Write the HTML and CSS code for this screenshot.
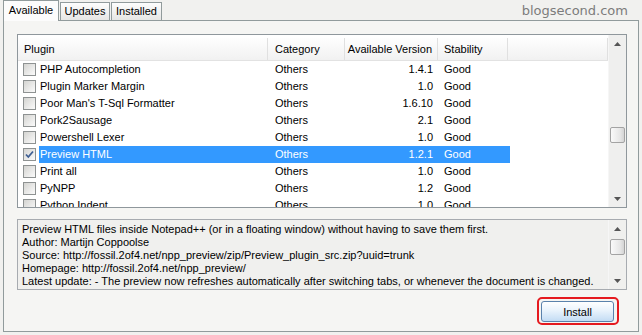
FILE: index.html
```html
<!doctype html>
<html lang="en">
    <head>
        <meta charset="UTF-8" />
        <title>Plugin Manager</title>
        <link rel="stylesheet" href="styles.css">
    </head>
    <body>
        <div class="top">
            <div class="tabs">
                <div class="tab tab-active">Available</div>
                <div class="tab tab-updates">Updates</div>
                <div class="tab tab-installed">Installed</div>
            </div>
            <div class="watermark">blogsecond.com</div>
        </div>

        <div class="panel">
            <div class="listbox">
                <div class="list">
                    <div class="list-header">
                        <div class="h-plugin">Plugin</div>
                        <div class="h-cat">Category</div>
                        <div class="h-ver">Available Version</div>
                        <div class="h-stab">Stability</div>
                        <div class="h-rest"></div>
                    </div>
                    <div id="rows"></div>
                </div>
                <div class="vscroll list-scroll">
                    <div class="sb-btn">
                        <svg width="7" height="4" viewBox="0 0 7 4"><polygon points="0,4 3.5,0 7,4" fill="#555" /></svg>
                    </div>
                    <div class="sb-track">
                        <div class="sb-thumb"></div>
                    </div>
                    <div class="sb-btn">
                        <svg width="7" height="4" viewBox="0 0 7 4"><polygon points="0,0 7,0 3.5,4" fill="#555" /></svg>
                    </div>
                </div>
            </div>

            <div class="desc">
                <div class="desc-text">
                    <div>Preview HTML files inside Notepad++ (or in a floating window) without having to save them first.</div>
                    <div>Author: Martijn Coppoolse</div>
                    <div>Source: http://fossil.2of4.net/npp_preview/zip/Preview_plugin_src.zip?uuid=trunk</div>
                    <div>Homepage: http://fossil.2of4.net/npp_preview/</div>
                    <div>Latest update: - The preview now refreshes automatically after switching tabs, or whenever the document is changed.</div>
                </div>
                <div class="vscroll desc-scroll">
                    <div class="sb-btn">
                        <svg width="7" height="4" viewBox="0 0 7 4"><polygon points="0,4 3.5,0 7,4" fill="#555" /></svg>
                    </div>
                    <div class="sb-track">
                        <div class="sb-thumb"></div>
                    </div>
                    <div class="sb-btn">
                        <svg width="7" height="4" viewBox="0 0 7 4"><polygon points="0,0 7,0 3.5,4" fill="#555" /></svg>
                    </div>
                </div>
            </div>

            <div class="actions">
                <div class="highlight">
                    <button class="install-btn">Install</button>
                </div>
            </div>
        </div>

        <script>
            // Plugin list data
            const plugins = [
                ["PHP Autocompletion", "Others", "1.4.1", "Good"],
                ["Plugin Marker Margin", "Others", "1.0", "Good"],
                ["Poor Man's T-Sql Formatter", "Others", "1.6.10", "Good"],
                ["Pork2Sausage", "Others", "2.1", "Good"],
                ["Powershell Lexer", "Others", "1.0", "Good"],
                ["Preview HTML", "Others", "1.2.1", "Good"],
                ["Print all", "Others", "1.0", "Good"],
                ["PyNPP", "Others", "1.2", "Good"],
                ["Python Indent", "Others", "1.0", "Good"],
            ];
            const selected = 5;
            const checkSvg =
                '<svg width="11" height="11" viewBox="0 0 11 11"><path d="M2 5.5 L4.3 8 L9 2.5" fill="none" stroke="#3f5f93" stroke-width="1.8" /></svg>';

            const rowsEl = document.getElementById("rows");
            plugins.forEach((p, i) => {
                const row = document.createElement("div");
                row.className = "row" + (i === selected ? " row-sel" : "");
                row.innerHTML =
                    '<div class="chk-cell"><span class="chk">' +
                    (i === selected ? checkSvg : "") +
                    "</span></div>" +
                    '<div class="cells">' +
                    '<div class="c-name">' + p[0] + "</div>" +
                    '<div class="c-cat">' + p[1] + "</div>" +
                    '<div class="c-ver">' + p[2] + "</div>" +
                    '<div class="c-stab">' + p[3] + "</div>" +
                    "</div>";
                rowsEl.appendChild(row);
            });
        </script>
    </body>
</html>
```

FILE: styles.css
```css
body {
    margin: 0;
    width: 642px;
    height: 335px;
    overflow: hidden;
    background-color: #f1f1ef;
    font-family: "Liberation Sans", Arial, sans-serif;
    font-size: 11px;
    color: #000;
}
.top {
    display: flex;
    align-items: flex-end;
    height: 20px;
    padding-left: 3px;
}
.tabs {
    display: flex;
    align-items: flex-end;
}
.tab {
    height: 17px;
    line-height: 17px;
    border: 1px solid #919b9c;
    border-bottom: none;
    background: linear-gradient(#fdfdfd, #e6e6e4);
    text-align: center;
}
.tab-active {
    position: relative;
    z-index: 1;
    width: 54px;
    height: 20px;
    line-height: 19px;
    margin-bottom: -1px;
    background: #fcfcfc;
}
.tab-updates {
    width: 48px;
    margin-left: 1px;
}
.tab-installed {
    width: 49px;
    margin-left: 1px;
}
.watermark {
    margin-left: auto;
    margin-right: 14px;
    align-self: center;
    font-family: "DejaVu Sans", sans-serif;
    font-size: 13px;
    color: #7c7c7c;
}
.panel {
    margin-left: 3px;
    width: 610px;
    height: 297px;
    padding: 13px 11px 0 13px;
    border: 1px solid #919b9c;
    background-color: #f5f5f3;
}
.listbox {
    display: flex;
    height: 172px;
    border: 1px solid #8f979c;
    background-color: #fff;
}
.list {
    flex: 1;
    overflow: hidden;
    padding-top: 3px;
}
.list-header {
    display: flex;
    height: 22px;
    line-height: 22px;
    border-bottom: 1px solid #e2e2e2;
    background: linear-gradient(#fefefe, #f1f1f1);
}
.list-header > div {
    box-sizing: border-box;
    border-right: 1px solid #e0e0e0;
}
.h-plugin {
    width: 250px;
    padding-left: 6px;
}
.h-cat {
    width: 77px;
    padding-left: 7px;
}
.h-ver {
    width: 93px;
    text-align: right;
    padding-right: 5px;
}
.h-stab {
    width: 70px;
    padding-left: 6px;
}
.h-rest {
    width: 100px;
}
.row {
    display: flex;
    height: 17px;
    line-height: 17px;
}
.chk-cell {
    width: 21px;
    display: flex;
    align-items: center;
}
.chk {
    box-sizing: border-box;
    width: 13px;
    height: 13px;
    margin-left: 5px;
    border: 1px solid #8e9292;
    background: linear-gradient(135deg, #d4d4d1, #fbfbfb);
    display: flex;
    align-items: center;
    justify-content: center;
}
.cells {
    display: flex;
    width: 471px;
}
.cells > div {
    box-sizing: border-box;
    white-space: nowrap;
}
.c-name {
    width: 229px;
    padding-left: 1px;
}
.c-cat {
    width: 77px;
    padding-left: 7px;
}
.c-ver {
    width: 93px;
    text-align: right;
    padding-right: 5px;
}
.c-stab {
    width: 72px;
    padding-left: 6px;
}
.row-sel .cells {
    background-color: #3399ff;
    color: #fff;
}
.vscroll {
    width: 17px;
    display: flex;
    flex-direction: column;
    background-color: #efefee;
    border-left: 1px solid #f6f6f6;
}
.sb-btn {
    height: 17px;
    display: flex;
    align-items: center;
    justify-content: center;
}
.sb-track {
    flex: 1;
}
.sb-thumb {
    box-sizing: border-box;
    width: 15px;
    height: 16px;
    margin-left: 1px;
    border: 1px solid #a3a3a3;
    border-radius: 2px;
    background: linear-gradient(90deg, #fafafa, #e6e6e6 70%, #d4d4d4);
}
.list-scroll .sb-thumb {
    margin-top: 75px;
}
.desc-scroll .sb-thumb {
    margin-top: 2px;
}
.desc {
    display: flex;
    height: 69px;
    margin-top: 11px;
    border: 1px solid #a7abb0;
    background-color: #f0f0ee;
}
.desc-text {
    flex: 1;
    overflow: hidden;
    padding: 3px 4px 0;
    line-height: 13px;
    white-space: nowrap;
}
.desc .vscroll {
    background-color: #f0f0ee;
}
.actions {
    display: flex;
    justify-content: flex-end;
    margin-top: 7px;
    padding-right: 8px;
}
.highlight {
    border: 2px solid #e51a1f;
    border-radius: 5px;
    padding: 2px 3px 1px 2px;
}
.install-btn {
    display: block;
    width: 73px;
    height: 21px;
    padding: 0;
    border: 1px solid #5b82ac;
    border-radius: 3px;
    background: linear-gradient(#ffffff, #e9f3fc 45%, #c3dcf4);
    font-family: "Liberation Sans", Arial, sans-serif;
    font-size: 11px;
    color: #000;
}
```
